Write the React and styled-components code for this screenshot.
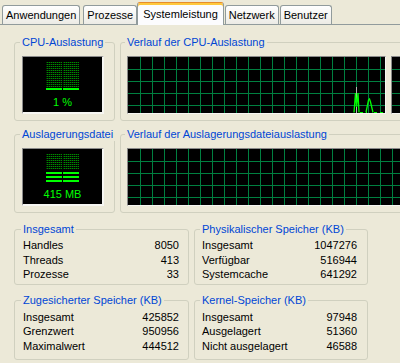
import React from 'react';
import styled, { createGlobalStyle } from 'styled-components';

const GlobalStyle = createGlobalStyle`
  html, body {
    margin: 0;
    padding: 0;
    background: #ECE9D8;
  }
  body {
    font-family: 'Liberation Sans', Arial, sans-serif;
    font-size: 11px;
    color: #000;
  }
`;

const Window = styled.div`
  width: 400px;
  height: 363px;
  overflow: hidden;
  background: #ECE9D8;
`;

const TabStrip = styled.div`
  display: flex;
  align-items: flex-end;
  height: 24px;
  padding-left: 2px;
  box-sizing: border-box;
`;

const Tab = styled.div`
  position: relative;
  z-index: ${(p) => (p.$active ? 2 : 1)};
  flex: none;
  height: ${(p) => (p.$active ? 23 : 19)}px;
  margin-right: ${(p) => p.$gap}px;
  margin-bottom: ${(p) => (p.$active ? -1 : 0)}px;
  padding: ${(p) => (p.$active ? '5px 5px 0' : '3px 3px 0')};
  box-sizing: border-box;
  border: 1px solid #919B9C;
  border-bottom: none;
  border-top-color: ${(p) => (p.$active ? '#E68B2C' : '#919B9C')};
  border-radius: 3px 3px 0 0;
  background: ${(p) => (p.$active ? '#FCFCFE' : 'linear-gradient(#FFFFFF, #ECEBE5)')};
  box-shadow: ${(p) => (p.$active ? 'inset 0 2px 0 #FFC83C' : 'none')};
  line-height: 13px;
  white-space: nowrap;
`;

const Panel = styled.div`
  border-top: 1px solid #919B9C;
  padding: 11px 0 0 14px;
  display: flex;
  flex-direction: column;
`;

const Row = styled.div`
  display: flex;
  gap: 5px;
  margin-top: ${(p) => p.$top || 0}px;
`;

const Group = styled.fieldset`
  flex: none;
  margin: 0;
  min-width: 0;
  width: ${(p) => p.$width}px;
  box-sizing: border-box;
  border: 1px solid #D0D0BF;
  border-radius: 3px;
  padding: ${(p) => p.$pad};
  display: ${(p) => (p.$flex ? 'flex' : 'block')};
  gap: 5px;
`;

const Legend = styled.legend`
  margin-left: -2px;
  padding: 0 2px;
  color: #0046D5;
  font-size: 11px;
  line-height: 13px;
  white-space: nowrap;
`;

const Meter = styled.div`
  width: 82px;
  height: 58px;
  box-sizing: border-box;
  background: #000;
  border-style: solid;
  border-width: 1px 2px 2px 1px;
  border-color: #8A8A8A #F6F6F2 #F6F6F2 #8A8A8A;
  display: flex;
  flex-direction: column;
  align-items: center;
  padding-top: 5px;
`;

const Bars = styled.div`
  display: flex;
  gap: 1px;
  height: 28px;
`;

const BarColumn = styled.div`
  width: 16px;
  height: 28px;
  display: flex;
  flex-direction: column;
`;

const DimPart = styled.div`
  flex: 1;
  background:
    repeating-linear-gradient(90deg, rgba(0, 0, 0, 0.6) 0 1px, transparent 1px 2px),
    repeating-linear-gradient(to bottom, #008A00 0 1px, #000 1px 2px);
`;

const LitPart = styled.div`
  height: ${(p) => p.$h}px;
  background: repeating-linear-gradient(to top, #00FF00 0 2px, #000 2px 4px);
`;

const MeterText = styled.div`
  margin-top: 6px;
  color: #00FF00;
  line-height: 13px;
  font-size: 11px;
  white-space: nowrap;
`;

const GraphFrame = styled.div`
  flex: none;
  width: ${(p) => p.$w}px;
  height: 58px;
  box-sizing: border-box;
  background: #000;
  border-style: solid;
  border-width: 1px;
  border-color: #8A8A8A #F6F6F2 #F6F6F2 #8A8A8A;
`;

const GraphSvg = styled.svg`
  display: block;
`;

const StatRow = styled.div`
  display: flex;
  justify-content: space-between;
  height: 14.5px;
  line-height: 14.5px;
  white-space: nowrap;
`;

function UsageMeter({ lit, label }) {
  return (
    <Meter>
      <Bars>
        {[0, 1].map((i) => (
          <BarColumn key={i}>
            <DimPart />
            <LitPart $h={lit} />
          </BarColumn>
        ))}
      </Bars>
      <MeterText>{label}</MeterText>
    </Meter>
  );
}

function HistoryGraph({ width, children }) {
  const w = width - 2;
  const h = 56;
  const cols = [];
  for (let x = 12; x < w; x += 12) cols.push(x);
  const rows = [12, 24, 36, 48];
  return (
    <GraphFrame $w={width}>
      <GraphSvg width={w} height={h}>
        <g shapeRendering="crispEdges" stroke="#008040">
          {cols.map((x) => (
            <line key={'c' + x} x1={x + 0.5} y1={0} x2={x + 0.5} y2={h} />
          ))}
          {rows.map((y) => (
            <line key={'r' + y} x1={0} y1={y + 0.5} x2={w} y2={y + 0.5} />
          ))}
        </g>
        {children}
      </GraphSvg>
    </GraphFrame>
  );
}

function CpuSpikes() {
  return (
    <g fill="none">
      <line x1="228.5" y1="30" x2="228.5" y2="56" stroke="#B4B4B4" />
      <polyline points="226,55.5 227.5,36 228.5,50 230,36 231,55.5" stroke="#00FF00" strokeWidth="1.3" />
      <line x1="232" y1="55.5" x2="239" y2="55.5" stroke="#00FF00" strokeDasharray="3 3" />
      <polyline points="238,55.5 240.5,43 241.5,42 242.5,45 245,55.5" stroke="#00FF00" strokeWidth="1.3" />
      <line x1="246" y1="55.5" x2="256" y2="55.5" stroke="#00FF00" strokeDasharray="3 3" />
    </g>
  );
}

function StatGroup({ title, width, pad, items }) {
  return (
    <Group $width={width} $pad={pad}>
      <Legend>{title}</Legend>
      {items.map(([k, v]) => (
        <StatRow key={k}>
          <span>{k}</span>
          <span>{v}</span>
        </StatRow>
      ))}
    </Group>
  );
}

const tabs = [
  ['Anwendungen', 3],
  ['Prozesse', 0],
  ['Systemleistung', 1],
  ['Netzwerk', 1],
  ['Benutzer', 0],
];

export default function App() {
  return (
    <Window>
      <GlobalStyle />
      <TabStrip>
        {tabs.map(([t, gap]) => (
          <Tab key={t} $active={t === 'Systemleistung'} $gap={gap}>
            {t}
          </Tab>
        ))}
      </TabStrip>
      <Panel>
        <Row>
          <Group $width={101} $pad="7px 0 6px 7px">
            <Legend>CPU-Auslastung</Legend>
            <UsageMeter lit={2} label="1 %" />
          </Group>
          <Group $width={540} $pad="7px 0 6px 6px" $flex>
            <Legend>Verlauf der CPU-Auslastung</Legend>
            <HistoryGraph width={259}>
              <CpuSpikes />
            </HistoryGraph>
            <HistoryGraph width={259} />
          </Group>
        </Row>
        <Row $top={7}>
          <Group $width={101} $pad="7px 0 6px 7px">
            <Legend>Auslagerungsdatei</Legend>
            <UsageMeter lit={12} label="415 MB" />
          </Group>
          <Group $width={540} $pad="7px 0 6px 6px" $flex>
            <Legend>Verlauf der Auslagerungsdateiauslastung</Legend>
            <HistoryGraph width={528} />
          </Group>
        </Row>
        <Row $top={10}>
          <StatGroup
            title="Insgesamt"
            width={175}
            pad="2px 9px 2px 8px"
            items={[
              ['Handles', '8050'],
              ['Threads', '413'],
              ['Prozesse', '33'],
            ]}
          />
          <StatGroup
            title="Physikalischer Speicher (KB)"
            width={174}
            pad="2px 10px 2px 7px"
            items={[
              ['Insgesamt', '1047276'],
              ['Verfügbar', '516944'],
              ['Systemcache', '641292'],
            ]}
          />
        </Row>
        <Row $top={9}>
          <StatGroup
            title="Zugesicherter Speicher (KB)"
            width={175}
            pad="3px 9px 6px 8px"
            items={[
              ['Insgesamt', '425852'],
              ['Grenzwert', '950956'],
              ['Maximalwert', '444512'],
            ]}
          />
          <StatGroup
            title="Kernel-Speicher (KB)"
            width={174}
            pad="3px 10px 6px 7px"
            items={[
              ['Insgesamt', '97948'],
              ['Ausgelagert', '51360'],
              ['Nicht ausgelagert', '46588'],
            ]}
          />
        </Row>
      </Panel>
    </Window>
  );
}
